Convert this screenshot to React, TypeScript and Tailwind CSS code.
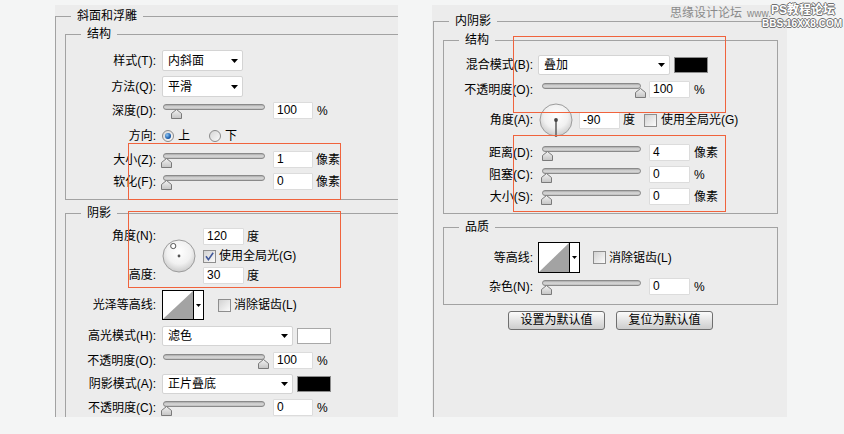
import React from 'react';

type Kids = { children: React.ReactNode };

const Legend: React.FC<Kids> = ({ children }) => (
  <legend className="ml-[15px] px-[6px] text-[12px] leading-[16px]">{children}</legend>
);

const Label: React.FC<Kids & { className: string }> = ({ className, children }) => (
  <span className={`shrink-0 whitespace-nowrap text-right ${className}`}>{children}</span>
);

const Arrow = () => (
  <svg width="7" height="4" viewBox="0 0 7 4" className="shrink-0">
    <path d="M0 0H7L3.5 4Z" fill="#000" />
  </svg>
);

const Select: React.FC<{ value: string; className: string }> = ({ value, className }) => (
  <div className={`flex shrink-0 items-center justify-between rounded-[2px] border border-[#d4d4d4] bg-white pl-[5px] pr-[4px] ${className}`}>
    <span>{value}</span>
    <Arrow />
  </div>
);

const NumInput: React.FC<{ value: string; className?: string }> = ({ value, className }) => (
  <div className={`h-[17px] shrink-0 rounded-[1px] border border-[#dcdcdc] bg-white pl-[3px] leading-[15px] ${className ?? 'w-[40px]'}`}>
    {value}
  </div>
);

const Swatch: React.FC<{ dark?: boolean; className: string }> = ({ dark, className }) => (
  <span className={`h-[16px] w-[34px] shrink-0 border ${dark ? 'border-[#8c8c8c] bg-black' : 'border-[#a8a8a8] bg-white'} ${className}`} />
);

const Checkbox: React.FC<{ checked?: boolean; className?: string }> = ({ checked, className }) => (
  <span className={`flex h-[13px] w-[13px] shrink-0 items-center justify-center border border-[#8e8e8e] bg-linear-to-br from-[#d2d2d2] to-[#fbfbfb] ${className ?? ''}`}>
    {checked && (
      <svg width="9" height="9" viewBox="0 0 9 9">
        <path d="M1 4.2L3.4 7.6L8.2 0.8" fill="none" stroke="#41589a" strokeWidth="1.6" />
      </svg>
    )}
  </span>
);

const Radio: React.FC<{ checked?: boolean; className?: string }> = ({ checked, className }) => (
  <span className={`flex h-[12px] w-[12px] shrink-0 items-center justify-center rounded-full border border-[#8a8a8a] bg-linear-to-br from-[#d6d6d6] to-[#fafafa] ${className ?? ''}`}>
    {checked && <span className="h-[6px] w-[6px] rounded-full bg-[radial-gradient(circle_at_35%_35%,#8fc6f2,#1d5fae_60%,#0c3c78)]" />}
  </span>
);

// angle dial; angle in degrees like photoshop (0 = right, 90 = up)
const Dial: React.FC<{ id: string; angle: number; ring?: boolean; className?: string }> = ({ id, angle, ring, className }) => {
  const r = ring ? 11.5 : 16;
  const x = 17 + Math.cos((angle * Math.PI) / 180) * r;
  const y = 17 - Math.sin((angle * Math.PI) / 180) * r;
  return (
    <svg width="34" height="34" viewBox="0 0 34 34" className={`shrink-0 ${className ?? ''}`}>
      <defs>
        <radialGradient id={id} cx="50%" cy="38%" r="62%">
          <stop offset="0" stopColor="#ffffff" />
          <stop offset="0.6" stopColor="#f1f1f1" />
          <stop offset="1" stopColor="#cbcbcb" />
        </radialGradient>
      </defs>
      <circle cx="17" cy="17" r="16" fill={`url(#${id})`} stroke="#9c9c9c" />
      {ring ? (
        <>
          <circle cx={x} cy={y} r="2.6" fill="#fff" stroke="#555" />
          <circle cx="17" cy="17" r="1.4" fill="#555" />
        </>
      ) : (
        <>
          <line x1="17" y1="17" x2={x} y2={y + 1} stroke="#666" strokeWidth="1.6" />
          <circle cx="17" cy="17" r="1.9" fill="#444" />
        </>
      )}
    </svg>
  );
};

const Slider: React.FC<{ value: number; max?: number; side: 'l' | 'r' }> = ({ value, max = 100, side }) => {
  const [lo, hi] = side === 'l' ? [-1, 96] : [3, 97];
  const left = lo + (value / max) * (hi - lo);
  return (
    <div className="relative h-[17px] w-[107px] shrink-0">
      <div
        className={`mt-[4px] h-[6px] rounded-full border border-[#8a8a8a] bg-linear-to-b from-[#a9a9a9] via-[#dadada] to-[#bdbdbd] ${
          side === 'l' ? 'ml-[1px] w-[102px]' : 'ml-[4px] w-[99px]'
        }`}
      />
      <svg width="11" height="10" viewBox="0 0 11 10" className="absolute top-[5px]" style={{ left }}>
        <defs>
          <linearGradient id="thumbg" x1="0" y1="0" x2="0" y2="1">
            <stop offset="0" stopColor="#f2f2f2" />
            <stop offset="1" stopColor="#c4c4c4" />
          </linearGradient>
        </defs>
        <path d="M5.5 0.5L10.5 4.5V9.5H0.5V4.5Z" fill="url(#thumbg)" stroke="#7a7a7a" />
      </svg>
    </div>
  );
};

const Contour: React.FC<{ className?: string }> = ({ className }) => (
  <div className={`flex h-full w-[42px] shrink-0 border border-black bg-white ${className ?? ''}`}>
    <svg viewBox="0 0 30 30" preserveAspectRatio="none" className="h-full w-[30px]">
      <polygon points="0,30 30,0 30,30" fill="#a3a3a3" />
    </svg>
    <div className="w-px bg-black" />
    <div className="flex flex-1 items-center justify-center">
      <svg width="5" height="3" viewBox="0 0 5 3">
        <path d="M0 0H5L2.5 3Z" fill="#000" />
      </svg>
    </div>
  </div>
);

const Button: React.FC<Kids> = ({ children }) => (
  <button className="h-[19px] w-[97px] rounded-[3px] border border-[#6f6f6f] bg-linear-to-b from-[#fbfbfb] to-[#cdcdcd] text-[12px] leading-[17px] text-black">
    {children}
  </button>
);

const LEFT_LABEL = 'w-[90px]';
const RIGHT_LABEL = 'w-[89px]';

const BevelPanel = () => (
  <div className="h-[412px] w-[343px] shrink-0 overflow-hidden bg-[#ececec] pt-[3px]">
    <fieldset className="h-[440px] w-[420px] border border-[#a2a2a2]">
      <Legend>斜面和浮雕</Legend>

      <fieldset className="ml-[9px] mt-[2px] w-[400px] border border-[#a2a2a2] pb-[9px]">
        <Legend>结构</Legend>
        <div className="mt-[8px] flex h-[21px] items-center">
          <Label className={LEFT_LABEL}>样式(T):</Label>
          <Select value="内斜面" className="ml-[6px] h-[21px] w-[81px]" />
        </div>
        <div className="mt-[5px] flex h-[21px] items-center">
          <Label className={LEFT_LABEL}>方法(Q):</Label>
          <Select value="平滑" className="ml-[6px] h-[21px] w-[81px]" />
        </div>
        <div className="mt-[5px] flex h-[17px] items-center">
          <Label className={LEFT_LABEL}>深度(D):</Label>
          <div className="ml-[6px]"><Slider value={100} max={1000} side="l" /></div>
          <NumInput value="100" className="ml-[4px] w-[40px]" />
          <span className="ml-[4px]">%</span>
        </div>
        <div className="mt-[10px] flex h-[14px] items-center">
          <Label className={LEFT_LABEL}>方向:</Label>
          <Radio checked className="ml-[6px]" />
          <span className="ml-[4px]">上</span>
          <Radio className="ml-[19px]" />
          <span className="ml-[4px]">下</span>
        </div>
        <div className="mt-[8px] flex h-[17px] items-center">
          <Label className={LEFT_LABEL}>大小(Z):</Label>
          <div className="ml-[6px]"><Slider value={1} max={250} side="l" /></div>
          <NumInput value="1" className="ml-[4px] w-[40px]" />
          <span className="ml-[3px]">像素</span>
        </div>
        <div className="mt-[5px] flex h-[17px] items-center">
          <Label className={LEFT_LABEL}>软化(F):</Label>
          <div className="ml-[6px]"><Slider value={0} side="l" /></div>
          <NumInput value="0" className="ml-[4px] w-[40px]" />
          <span className="ml-[3px]">像素</span>
        </div>
      </fieldset>

      <fieldset className="ml-[9px] mt-[5px] h-[300px] w-[400px] border border-[#a2a2a2]">
        <Legend>阴影</Legend>
        <div className="mt-[7px] flex h-[56px]">
          <div className={`flex shrink-0 flex-col justify-between text-right ${LEFT_LABEL}`}>
            <span className="leading-[17px]">角度(N):</span>
            <span className="leading-[17px]">高度:</span>
          </div>
          <Dial id="dial-l" angle={120} ring className="ml-[6px] self-center" />
          <div className="ml-[7px] flex flex-col">
            <div className="flex h-[17px] items-center">
              <NumInput value="120" className="w-[41px]" />
              <span className="ml-[3px]">度</span>
            </div>
            <div className="flex h-[22px] items-center">
              <Checkbox checked />
              <span className="ml-[3px]">使用全局光(G)</span>
            </div>
            <div className="flex h-[17px] items-center">
              <NumInput value="30" className="w-[41px]" />
              <span className="ml-[3px]">度</span>
            </div>
          </div>
        </div>
        <div className="mt-[6px] flex h-[30px] items-center">
          <Label className={LEFT_LABEL}>光泽等高线:</Label>
          <Contour className="ml-[6px] w-[41px]" />
          <Checkbox className="ml-[14px]" />
          <span className="ml-[3px]">消除锯齿(L)</span>
        </div>
        <div className="mt-[6px] flex h-[20px] items-center">
          <Label className={LEFT_LABEL}>高光模式(H):</Label>
          <Select value="滤色" className="ml-[6px] h-[20px] w-[131px]" />
          <Swatch className="ml-[4px]" />
        </div>
        <div className="mt-[6px] flex h-[17px] items-center">
          <Label className={LEFT_LABEL}>不透明度(O):</Label>
          <div className="ml-[6px]"><Slider value={100} side="l" /></div>
          <NumInput value="100" className="ml-[4px] w-[40px]" />
          <span className="ml-[4px]">%</span>
        </div>
        <div className="mt-[5px] flex h-[20px] items-center">
          <Label className={LEFT_LABEL}>阴影模式(A):</Label>
          <Select value="正片叠底" className="ml-[6px] h-[20px] w-[131px]" />
          <Swatch dark className="ml-[4px]" />
        </div>
        <div className="mt-[5px] flex h-[17px] items-center">
          <Label className={LEFT_LABEL}>不透明度(C):</Label>
          <div className="ml-[6px]"><Slider value={0} side="l" /></div>
          <NumInput value="0" className="ml-[4px] w-[40px]" />
          <span className="ml-[4px]">%</span>
        </div>
      </fieldset>
    </fieldset>
  </div>
);

const InnerShadowPanel = () => (
  <div className="h-[412px] w-[355px] shrink-0 overflow-hidden bg-[#ececec] pt-[8px]">
    <fieldset className="ml-[1px] h-[440px] w-[380px] border border-[#a2a2a2]">
      <Legend>内阴影</Legend>

      <fieldset className="ml-[9px] mt-[3px] w-[335px] border border-[#a2a2a2] pb-[8px]">
        <Legend>结构</Legend>
        <div className="mt-[7px] flex h-[20px] items-center">
          <Label className={RIGHT_LABEL}>混合模式(B):</Label>
          <Select value="叠加" className="ml-[5px] h-[20px] w-[132px]" />
          <Swatch dark className="ml-[4px]" />
        </div>
        <div className="mt-[6px] flex h-[17px] items-center">
          <Label className={RIGHT_LABEL}>不透明度(O):</Label>
          <div className="ml-[5px]"><Slider value={100} side="r" /></div>
          <NumInput value="100" className="ml-[4px] w-[41px]" />
          <span className="ml-[4px]">%</span>
        </div>
        <div className="mt-[5px] flex h-[34px] items-center">
          <Label className={RIGHT_LABEL}>角度(A):</Label>
          <Dial id="dial-r" angle={-90} className="ml-[6px]" />
          <NumInput value="-90" className="ml-[6px] w-[41px]" />
          <span className="ml-[3px]">度</span>
          <Checkbox className="ml-[9px]" />
          <span className="ml-[4px]">使用全局光(G)</span>
        </div>
        <div className="mt-[7px] flex h-[17px] items-center">
          <Label className={RIGHT_LABEL}>距离(D):</Label>
          <div className="ml-[5px]"><Slider value={4} max={300} side="r" /></div>
          <NumInput value="4" className="ml-[4px] w-[41px]" />
          <span className="ml-[4px]">像素</span>
        </div>
        <div className="mt-[5px] flex h-[17px] items-center">
          <Label className={RIGHT_LABEL}>阻塞(C):</Label>
          <div className="ml-[5px]"><Slider value={0} side="r" /></div>
          <NumInput value="0" className="ml-[4px] w-[41px]" />
          <span className="ml-[4px]">%</span>
        </div>
        <div className="mt-[5px] flex h-[17px] items-center">
          <Label className={RIGHT_LABEL}>大小(S):</Label>
          <div className="ml-[5px]"><Slider value={0} side="r" /></div>
          <NumInput value="0" className="ml-[4px] w-[41px]" />
          <span className="ml-[4px]">像素</span>
        </div>
      </fieldset>

      <fieldset className="ml-[9px] mt-[5px] w-[335px] border border-[#a2a2a2] pb-[9px]">
        <Legend>品质</Legend>
        <div className="mt-[7px] flex h-[31px] items-center">
          <Label className={RIGHT_LABEL}>等高线:</Label>
          <Contour className="ml-[5px]" />
          <Checkbox className="ml-[13px]" />
          <span className="ml-[3px]">消除锯齿(L)</span>
        </div>
        <div className="mt-[5px] flex h-[17px] items-center">
          <Label className={RIGHT_LABEL}>杂色(N):</Label>
          <div className="ml-[5px]"><Slider value={0} side="r" /></div>
          <NumInput value="0" className="ml-[4px] w-[41px]" />
          <span className="ml-[4px]">%</span>
        </div>
      </fieldset>

      <div className="ml-[9px] mt-[6px] flex w-[335px] justify-center gap-[11px]">
        <Button>设置为默认值</Button>
        <Button>复位为默认值</Button>
      </div>
    </fieldset>
  </div>
);

const outline = '[text-shadow:1px_0_#6f6f6f,-1px_0_#6f6f6f,0_1px_#6f6f6f,0_-1px_#6f6f6f]';

export default function App() {
  return (
    <div className="relative flex h-[434px] w-[844px] gap-[34px] overflow-hidden bg-[#f4f5f5] pl-[55px] pt-[5px] font-['Liberation_Sans','Noto_Sans_CJK_SC',sans-serif] text-[12px] leading-[16px] text-black">
      <BevelPanel />
      <InnerShadowPanel />

      {/* annotation boxes */}
      <div className="pointer-events-none absolute left-[128px] top-[143px] h-[57px] w-[213px] border border-[#f0633d]" />
      <div className="pointer-events-none absolute left-[128px] top-[211px] h-[77px] w-[213px] border border-[#f0633d]" />
      <div className="pointer-events-none absolute left-[513px] top-[36px] h-[77px] w-[213px] border border-[#f0633d]" />
      <div className="pointer-events-none absolute left-[513px] top-[135px] h-[77px] w-[213px] border border-[#f0633d]" />

      {/* watermark */}
      <div className="pointer-events-none absolute left-[670px] top-[7px] flex items-end whitespace-nowrap text-[12px] leading-[12px] text-[#8a8a8a]">
        <span>思缘设计论坛</span>
        <span className="ml-[5px] text-[10px] leading-[11px]">www.</span>
      </div>
      <div className={`pointer-events-none absolute left-[771px] top-[3px] whitespace-nowrap text-[12px] font-bold leading-[14px] text-white ${outline}`}>
        PS教程论坛
      </div>
      <div className={`pointer-events-none absolute left-[762px] top-[19px] whitespace-nowrap text-[10px] font-bold leading-[10px] text-white ${outline}`}>
        BBS.16XX8.COM
      </div>
    </div>
  );
}
